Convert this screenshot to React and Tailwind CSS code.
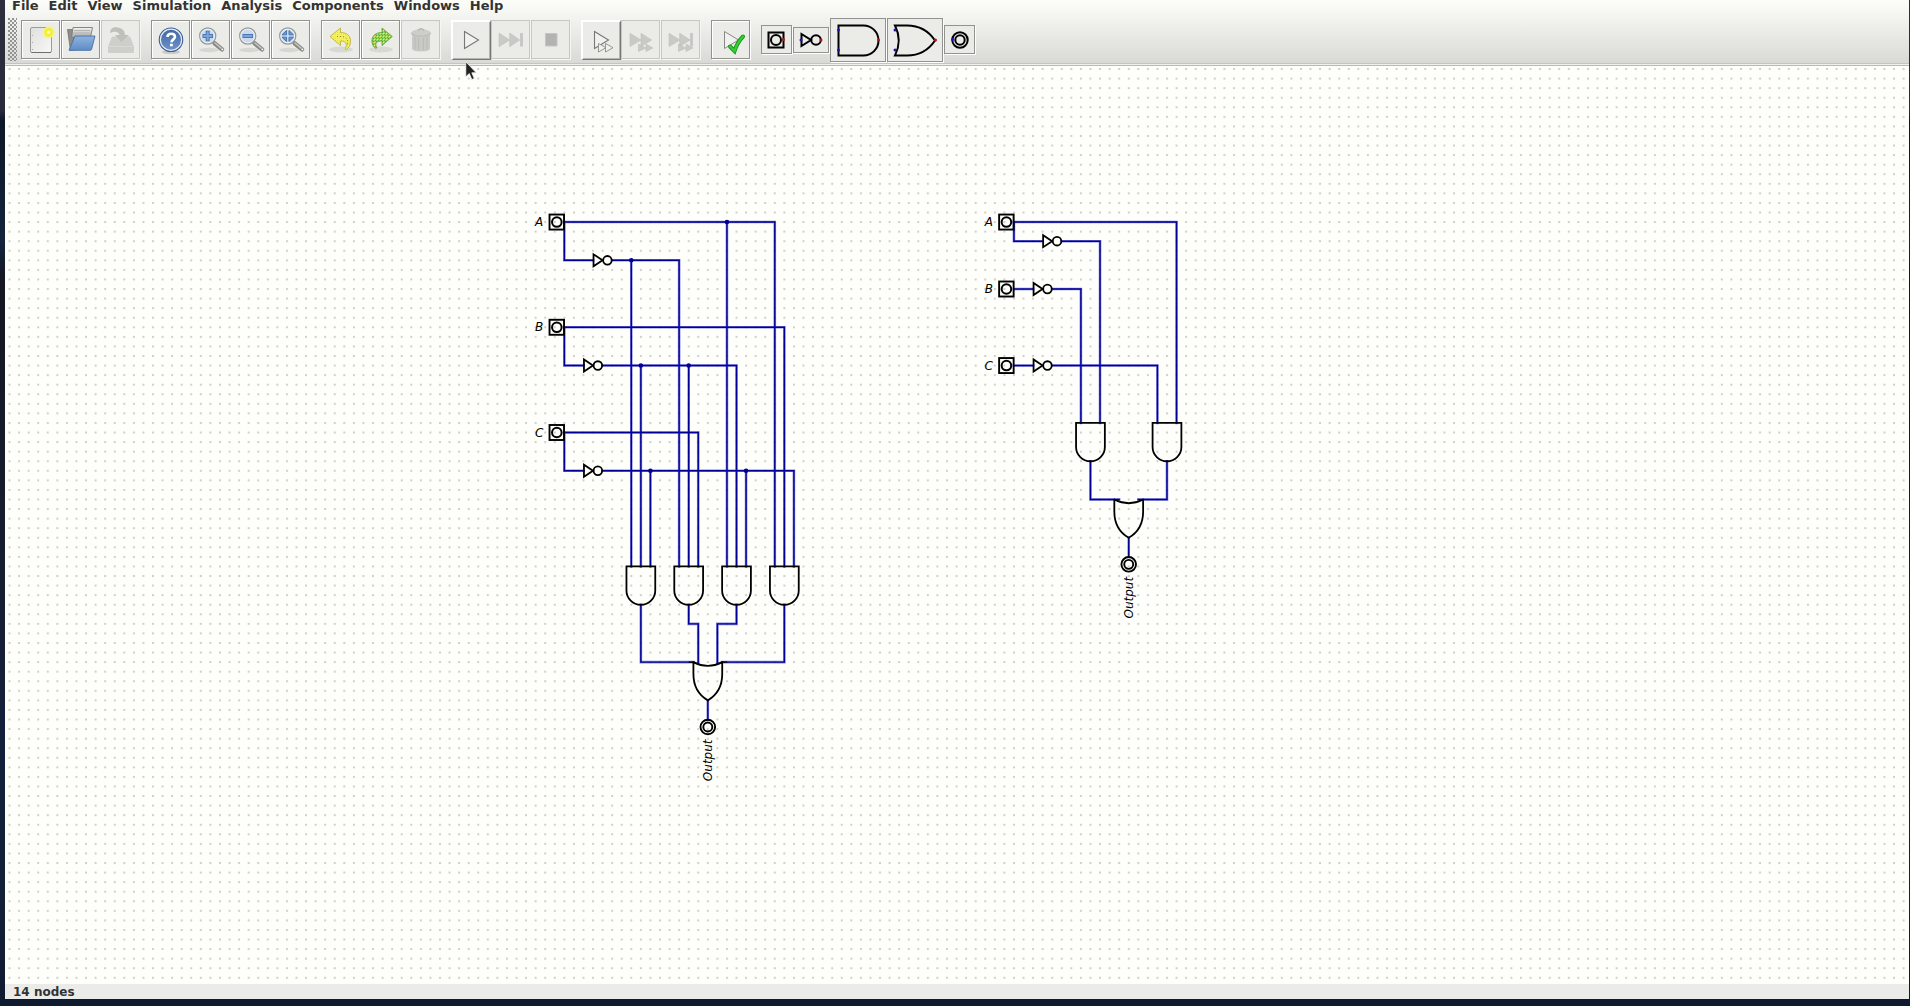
import React from "react";

const P = 9.566;
const gx = (i) => 4.5 + i * P;
const gy = (j) => 3 + j * P;

const MENUS = ["File", "Edit", "View", "Simulation", "Analysis", "Components", "Windows", "Help"];

function ToolButton({ label, kind = "normal", children }) {
  const looks = {
    normal: "mr-px size-[39px] border border-[#92938e] shadow-[1px_1px_0_#fff,inset_1px_1px_0_#fff]",
    disabled: "mr-px size-[39px] border border-[#c6c7c3] shadow-[1px_1px_0_#f6f7f4]",
    raised: "size-10 border-t-2 border-l-2 border-r border-b border-t-white border-l-white border-r-[#777874] border-b-[#777874] shadow-[inset_-1px_-1px_0_#b4b5b1]",
  };
  return (
    <button type="button" aria-label={label} title={label} disabled={kind === "disabled"} className={`shrink-0 overflow-hidden bg-[#ebece8] ${looks[kind]}`}>
      <svg viewBox="1 1 37 37" width="37" height="37" fill="none" aria-hidden="true">{children}</svg>
    </button>
  );
}

function GateButton({ label, className, w, h, children }) {
  return (
    <button type="button" aria-label={label} title={label} className={`mr-px shrink-0 border border-[#92938e] bg-[#ebece8] shadow-[1px_1px_0_#fff] ${className}`}>
      <svg viewBox={`1 1 ${w} ${h}`} width={w} height={h} fill="none" aria-hidden="true">{children}</svg>
    </button>
  );
}

function Group({ children }) {
  return <div className="mr-2.5 flex items-start">{children}</div>;
}

function Defs() {
  return (
    <svg width="0" height="0" className="absolute" aria-hidden="true">
      <defs>
        <linearGradient id="paper" x1="0" y1="0" x2="1" y2="1"><stop offset="0" stopColor="#dfe0dd" /><stop offset="1" stopColor="#f8f8f6" /></linearGradient>
        <linearGradient id="papers" x1="0" y1="0" x2="0" y2="1"><stop offset="0" stopColor="#f4f4f2" /><stop offset="1" stopColor="#a4a5a1" /></linearGradient>
        <linearGradient id="blue" x1="0" y1="0" x2="0" y2="1"><stop offset="0" stopColor="#8fb3df" /><stop offset="1" stopColor="#5f8dc6" /></linearGradient>
        <linearGradient id="help" x1="0" y1="0" x2="0" y2="1"><stop offset="0" stopColor="#3f639f" /><stop offset="1" stopColor="#6f96cc" /></linearGradient>
        <pattern id="undoFill" width="2" height="2" patternUnits="userSpaceOnUse"><rect width="2" height="2" fill="#f5f25c" /><rect width="1" height="1" fill="#ebe244" /></pattern>
        <pattern id="redoFill" width="3" height="3" patternUnits="userSpaceOnUse"><rect width="3" height="3" fill="#9ad655" /><rect width="1" height="1" fill="#3fae3c" /><rect x="1" y="1" width="1" height="1" fill="#e9ee60" /><rect x="2" y="2" width="1" height="1" fill="#4fb444" /></pattern>
      </defs>
    </svg>
  );
}

function Lens({ children }) {
  return (
    <>
      <ellipse cx="18" cy="30" rx="10" ry="2.2" fill="#d6d7d3" />
      <path d="M23.5 23.2 31 29.4" stroke="#888985" strokeWidth="4.4" strokeLinecap="round" />
      <path d="M24 23 31 28.8" stroke="#c4c5c1" strokeWidth="1.6" strokeLinecap="round" />
      <circle cx="31.3" cy="29.4" r="1.3" fill="#f2f2f0" stroke="#777" strokeWidth=".6" />
      <circle cx="16.7" cy="16" r="8" fill="#c9daef" stroke="#9a9b97" strokeWidth="1.4" />
      <circle cx="16.7" cy="16" r="6.9" stroke="#f0f3f6" strokeWidth="1" />
      {children}
    </>
  );
}

function Toolbar() {
  return (
    <div role="toolbar" aria-label="Main" className="flex h-[47px] items-center pl-[3px]">
      <div className="mr-1 h-[43px] w-[9px] shrink-0 bg-[radial-gradient(circle_at_1px_1px,#8f908c_0.7px,transparent_0.9px),radial-gradient(circle_at_3px_3px,#8f908c_0.7px,transparent_0.9px)] bg-[length:4px_4px]" />
      <Group>
        <ToolButton label="New">
          <rect x="9.5" y="7.5" width="21" height="25" rx="1.5" fill="url(#paper)" stroke="#9b9c98" />
          <path d="M10.5 32.5h19.5" stroke="#6f706c" />
          <path d="M11.5 15v1M11.5 22v1M11.5 29v1" stroke="#aaa" />
          <circle cx="27.7" cy="12.3" r="5.8" fill="#f7f662" />
          <circle cx="27.7" cy="12.3" r="3" stroke="#f1ea2a" strokeWidth="1.4" />
          <circle cx="27.7" cy="12.3" r="1.3" fill="#fdfccc" />
        </ToolButton>
        <ToolButton label="Open">
          <path d="M6.5 9.5h5l1 2h17v16l-20 3z" fill="#8c8d89" stroke="#70716d" strokeWidth=".8" />
          <path d="M12 7.5h19.5l-2 10h-19z" fill="url(#papers)" stroke="#7b7c78" strokeWidth=".9" />
          <path d="M13 10.500h16M12.500 13h16" stroke="#b4b5b2" />
          <path d="M13.5 17c0-.8.5-1 1-1h19.5l-3.5 13.5c-.2.5-.5.8-1 .8H8z" fill="url(#blue)" stroke="#476fa5" strokeWidth=".9" />
        </ToolButton>
        <ToolButton label="Save" kind="disabled">
          <path d="M11 16.5h18l4 10v5.5q0 1-1 1H8q-1 0-1-1v-5.5z" fill="#cecfcb" />
          <path d="M8 26.5h24" stroke="#d9dad6" />
          <path d="M9 13C9 8 13 6.5 17 7.5c5 1 7 4 7 7.5h4l-7.5 7L14 15h4.5c-.5-3-4-4.5-9.500-2z" fill="#bfc0bc" />
        </ToolButton>
      </Group>
      <Group>
        <ToolButton label="Help">
          <ellipse cx="20" cy="32" rx="9" ry="2" fill="#c8c9c5" />
          <circle cx="20" cy="19.7" r="11.7" fill="url(#help)" stroke="#3c5c94" strokeWidth="1.2" />
          <circle cx="20" cy="19.7" r="10.6" stroke="#e6ebf3" strokeWidth="1.2" />
          <path d="M16.5 17q0-3.200 3.700-3.200T24 16.800c0 2.500-3.500 2.700-3.500 5.500" stroke="#fff" strokeWidth="2.6" />
          <rect x="19" y="23.7" width="2.8" height="2.6" fill="#fff" />
        </ToolButton>
        <ToolButton label="Zoom in"><Lens><path d="M11.5 16h10.5M16.7 10.800v10.400" stroke="#4a78b5" strokeWidth="4" /><path d="M12.3 16h8.800M16.7 11.600v8.800" stroke="#7fa5d6" strokeWidth="2" /></Lens></ToolButton>
        <ToolButton label="Zoom out"><Lens><path d="M11.5 16h10.5" stroke="#4a78b5" strokeWidth="4" /><path d="M12.3 16h8.800" stroke="#7fa5d6" strokeWidth="2" /></Lens></ToolButton>
        <ToolButton label="Fit to window"><Lens><path d="M15.5 10.5v4.300h-4.500zM18 10.5v4.300h4.500zM15.5 21.500v-4.300h-4.500zM18 21.500v-4.300h4.500z" fill="#6d97cd" stroke="#4a78b5" strokeWidth="1" /></Lens></ToolButton>
      </Group>
      <Group>
        <ToolButton label="Undo">
          <ellipse cx="20" cy="29.5" rx="12" ry="3" fill="#d8d9d5" />
          <path d="M9 16.5 19.5 8v4.5c7 0 10.5 4 10 9.5-.4 4-2 6-4.500 8-1-.5-1-1 0-3 1-3 0-6-5.500-6v4.500z" fill="url(#undoFill)" stroke="#bdb348" strokeWidth=".9" />
          <path d="M16 16.500h4c5 0 7.500 3 6.500 8" stroke="#8a8139" strokeDasharray="1 2" />
        </ToolButton>
        <ToolButton label="Redo">
          <ellipse cx="20" cy="29.5" rx="12" ry="3" fill="#d8d9d5" />
          <path d="M31.3 16.5 21 8v4.5c-7 0-10.500 4-10 9.500.4 3 1.500 5 4 6.500 1-.5 1-1 0-2.500-.8-3 1-5 6-5v4.500z" fill="url(#redoFill)" stroke="#799e43" strokeWidth=".9" />
        </ToolButton>
        <ToolButton label="Delete" kind="disabled">
          <path d="M11 13h18v15.5q0 3-9 3t-9-3z" fill="#c9cac6" />
          <path d="M14 17v12M17.500 18v12M22.500 18v12M26 17v12" stroke="#bbbcb8" strokeWidth="1.2" />
          <ellipse cx="20" cy="13.3" rx="10" ry="3.7" fill="#bfc0bc" />
          <ellipse cx="20" cy="12.3" rx="9" ry="3" fill="#cdceca" />
          <path d="M17 10.5q3-3.500 6 0" stroke="#b6b7b3" strokeWidth="1.5" />
        </ToolButton>
      </Group>
      <Group>
        <ToolButton label="Start simulation" kind="raised"><path d="M12.5 10.5 26.5 19 12.5 27.500z" stroke="#777874" fill="#f1f2ef" strokeWidth="1.1" /></ToolButton>
        <ToolButton label="Run to break" kind="disabled"><path d="M8 13l10.700 7L8 26.700zM18.700 13l10 7-10 6.700z" fill="#c9cac6" stroke="#bfc0bc" strokeWidth=".6" /><path d="M30.500 13v13.500" stroke="#c6c7c3" strokeWidth="2.8" /></ToolButton>
        <ToolButton label="Stop" kind="disabled"><path d="M14.500 13.500h11.500v12.500h-11.500z" fill="#b3b4b1" stroke="#c4c5c2" /></ToolButton>
      </Group>
      <Group>
        <ToolButton label="Single step" kind="raised">
          <path d="M12.5 10.5 26.5 19 12.5 27.500z" stroke="#777874" strokeWidth="1.1" fill="#f1f2ef" />
          <path d="M16.500 22.500l7.500 4.200-7.500 4.300zM23.500 22.500l7.500 4.200-7.500 4.300z" fill="#f1f2ef" stroke="#8d8e8a" strokeWidth=".9" />
        </ToolButton>
        <ToolButton label="Run fast" kind="disabled"><path d="M9 13.300l11 6.700L9 26.500zM20 13.300l10.700 6.700L20 26.500zM17.500 24l7.500 4-7.500 3.500zM25 24l7 4-7 3.500z" fill="#c9cac6" stroke="#bfc0bc" strokeWidth=".6" /></ToolButton>
        <ToolButton label="Run fast to break" kind="disabled"><path d="M8 13.300l11 6.700L8 26.500zM18.700 13.300l10.500 6.700-10.500 6.500zM17.500 24l7.500 4-7.500 3.500zM25 24l7 4-7 3.500z" fill="#c9cac6" stroke="#bfc0bc" strokeWidth=".6" /><path d="M30.500 13v13.500" stroke="#c6c7c3" strokeWidth="2.8" /></ToolButton>
      </Group>
      <Group>
        <ToolButton label="Run tests">
          <path d="M13.500 11.500 27.500 20 13.500 28.500z" stroke="#888985" fill="#f1f2ef" />
          <path d="M19 26.500l4.500 4.500Q26.500 22 32 16.500" stroke="#159015" strokeWidth="4" strokeLinecap="round" />
          <path d="M19 26.500l4.500 4.500Q26.500 22 32 16.500" stroke="#35cf35" strokeWidth="2.4" strokeLinecap="round" />
        </ToolButton>
      </Group>
      <div className="flex items-center">
        <GateButton label="Input" className="h-[29px] w-[31px]" w={29} h={27}>
          <rect x="7.5" y="7.5" width="15" height="15" stroke="#000" strokeWidth="2" />
          <circle cx="15" cy="15" r="5" stroke="#000" strokeWidth="2" />
          <circle cx="22.5" cy="14.5" r="1.5" fill="#b01818" />
        </GateButton>
        <GateButton label="Not" className="h-[26px] w-9" w={34} h={24}>
          <path d="M8.500 7v12l9.500-6z" stroke="#000" strokeWidth="2" />
          <circle cx="23" cy="13" r="4.8" stroke="#000" strokeWidth="2" />
          <circle cx="8" cy="13" r="1.5" fill="#1818b0" /><circle cx="28" cy="13" r="1.5" fill="#b01818" />
        </GateButton>
        <GateButton label="And" className="h-11 w-14" w={54} h={42}>
          <path d="M8.500 7.500h25a15 15 0 0 1 0 30h-25z" stroke="#000" strokeWidth="2" />
          <circle cx="8.5" cy="12" r="1.5" fill="#1818b0" /><circle cx="8.5" cy="32" r="1.5" fill="#1818b0" /><circle cx="48.5" cy="22" r="1.5" fill="#b01818" />
        </GateButton>
        <GateButton label="Or" className="h-11 w-14" w={54} h={42}>
          <path d="M8 7.500h12Q38 7.500 48 22.500 38 37.500 20 37.500H8q7.500-15 0-30z" stroke="#000" strokeWidth="2" />
          <circle cx="8" cy="12" r="1.5" fill="#1818b0" /><circle cx="8" cy="32" r="1.5" fill="#1818b0" /><circle cx="48.5" cy="22" r="1.5" fill="#b01818" />
        </GateButton>
        <GateButton label="Output" className="h-[29px] w-[31px]" w={29} h={27}>
          <circle cx="16" cy="15" r="7.7" stroke="#000" strokeWidth="2" />
          <circle cx="16" cy="15" r="4.7" stroke="#000" strokeWidth="2" />
          <circle cx="8.5" cy="14.5" r="1.5" fill="#1818b0" />
        </GateButton>
      </div>
    </div>
  );
}

function Wire({ pts }) {
  const points = pts.map(([i, j]) => `${gx(i)},${gy(j)}`).join(" ");
  return (
    <>
      <polyline points={points} stroke="#2020d0" strokeOpacity=".55" strokeWidth="2.6" strokeLinecap="square" />
      <polyline points={points} stroke="#000094" strokeWidth="1.4" strokeLinecap="square" />
    </>
  );
}

const Joint = ({ at: [i, j] }) => <circle cx={gx(i)} cy={gy(j)} r="2.3" fill="#000091" />;

function Input({ at: [i, j], name }) {
  return (
    <g transform={`translate(${gx(i)} ${gy(j)})`}>
      <rect x="-14.8" y="-7.5" width="14.5" height="15" stroke="#000" strokeWidth="1.9" />
      <circle cx="-7.5" cy="0" r="4.8" stroke="#000" strokeWidth="2" />
      <text x="-21" y="4" textAnchor="end" fill="#000" className="font-['DejaVu_Sans',sans-serif] text-[12px] italic">{name}</text>
    </g>
  );
}

function Not({ at: [i, j] }) {
  return (
    <g transform={`translate(${gx(i)} ${gy(j)})`} stroke="#000" strokeWidth="1.8">
      <path d="M.5-6v12l9-6z" />
      <circle cx="14.4" cy="0" r="4.3" />
    </g>
  );
}

function And({ at: [i, j] }) {
  return <path transform={`translate(${gx(i)} ${gy(j)})`} d="M-14.4 0h28.8v24a14.4 14.3 0 0 1-28.8 0z" stroke="#000" strokeWidth="1.8" />;
}

function Or({ at: [i, j] }) {
  return <path transform={`translate(${gx(i)} ${gy(j)})`} d="M-14.4 0q14.4 7.500 28.8 0v12Q14.4 30 0 38.300-14.4 30-14.4 12z" stroke="#000" strokeWidth="1.8" strokeLinejoin="round" />;
}

function Output({ at: [i, j] }) {
  return (
    <g transform={`translate(${gx(i)} ${gy(j)})`}>
      <circle cx="0" cy="7.5" r="7.3" stroke="#000" strokeWidth="1.9" />
      <circle cx="0" cy="7.5" r="4.5" stroke="#000" strokeWidth="1.9" />
      <text transform="translate(4 20) rotate(-90)" textAnchor="end" fill="#000" className="font-['DejaVu_Sans',sans-serif] text-[12px] italic">Output</text>
    </g>
  );
}

const WIRES = [
  [[58, 16], [80, 16], [80, 52]],
  [[58, 16], [58, 20], [61, 20]],
  [[63, 20], [70, 20], [70, 52]],
  [[65, 20], [65, 52]],
  [[75, 16], [75, 52]],
  [[58, 27], [81, 27], [81, 52]],
  [[58, 27], [58, 31], [60, 31]],
  [[62, 31], [76, 31], [76, 52]],
  [[66, 31], [66, 52]],
  [[71, 31], [71, 52]],
  [[58, 38], [72, 38], [72, 52]],
  [[58, 38], [58, 42], [60, 42]],
  [[62, 42], [82, 42], [82, 52]],
  [[67, 42], [67, 52]],
  [[77, 42], [77, 52]],
  [[66, 56], [66, 62], [71.5, 62]],
  [[71, 56], [71, 58], [72, 58], [72, 62.1]],
  [[76, 56], [76, 58], [74, 58], [74, 62.1]],
  [[81, 56], [81, 62], [74.5, 62]],
  [[73, 66], [73, 68]],
  [[105, 16], [122, 16], [122, 37]],
  [[105, 16], [105, 18], [108, 18]],
  [[110, 18], [114, 18], [114, 37]],
  [[105, 23], [107, 23]],
  [[109, 23], [112, 23], [112, 37]],
  [[105, 31], [107, 31]],
  [[109, 31], [120, 31], [120, 37]],
  [[113, 41], [113, 45], [116, 45]],
  [[121, 41], [121, 45], [118, 45]],
  [[117, 49], [117, 51]],
];
const JOINTS = [[75, 16], [65, 20], [66, 31], [71, 31], [67, 42], [77, 42]];

function Circuit() {
  return (
    <svg width="100%" height="100%" fill="none" className="block" role="img" aria-label="Circuit">
      <defs>
        <pattern id="grid" x={gx(-0.5)} y={gy(-0.5)} width={P} height={P} patternUnits="userSpaceOnUse">
          <rect x="3.8" y="3.8" width="2" height="2" fill="#cfd0ca" />
        </pattern>
      </defs>
      <rect width="100%" height="100%" fill="url(#grid)" />
      {WIRES.map((pts, k) => <Wire key={k} pts={pts} />)}
      {JOINTS.map((at) => <Joint key={at.join()} at={at} />)}
      <path d={`M${gx(71)} ${gy(62)}H${gx(71.6)}M${gx(74.4)} ${gy(62)}H${gx(75)}`} stroke="#000" strokeWidth="1.4" />
      <Input at={[58, 16]} name="A" />
      <Input at={[58, 27]} name="B" />
      <Input at={[58, 38]} name="C" />
      <Input at={[105, 16]} name="A" />
      <Input at={[105, 23]} name="B" />
      <Input at={[105, 31]} name="C" />
      {[[61, 20], [60, 31], [60, 42], [108, 18], [107, 23], [107, 31]].map((at) => <Not key={at.join()} at={at} />)}
      {[[66, 52], [71, 52], [76, 52], [81, 52], [113, 37], [121, 37]].map((at) => <And key={at.join()} at={at} />)}
      <Or at={[73, 62]} />
      <Or at={[117, 45]} />
      <Output at={[73, 68]} />
      <Output at={[117, 51]} />
    </svg>
  );
}

export default function App() {
  return (
    <div className="h-screen overflow-hidden bg-[linear-gradient(#2f2e3e,#2b2a3a_11%,#0c1828_12%,#14243c_24%,#151622_28%,#171c2c_50%,#14203a_70%,#122038_90%,#0e1a30)] pr-px pb-[7px] pl-[5px] font-['DejaVu_Sans',sans-serif]">
      <Defs />
      <div className="relative flex h-full flex-col bg-[#fefefa]">
        <header className="shrink-0 border-b border-[#b9bab6] bg-linear-to-b from-[#fdfef9] to-[#d8d9d5]">
          <nav aria-label="Menu" className="flex h-4 items-start gap-2.5 pl-[7px] text-[13px] leading-[12px] font-bold text-[#333]">
            {MENUS.map((m) => <button type="button" key={m} className="shrink-0">{m}</button>)}
          </nav>
          <Toolbar />
          <div className="h-0.5 border-t border-[#c4c5c1] bg-[#f0f1ed]" />
        </header>
        <main className="min-h-0 flex-1"><Circuit /></main>
        <footer className="h-[15px] shrink-0 bg-[#ebece9] pl-2 text-[12px] leading-[16px] font-bold text-[#333]">14 nodes</footer>
        <svg viewBox="0 0 12 20" width="12" height="20" className="pointer-events-none absolute top-[61px] left-[460px]" aria-hidden="true">
          <path d="M.8.8v15l3.500-3.300 2.500 6 2.500-1-2.500-5.700h4.500z" fill="#222" stroke="#f4f4f4" strokeWidth=".8" />
        </svg>
      </div>
    </div>
  );
}
